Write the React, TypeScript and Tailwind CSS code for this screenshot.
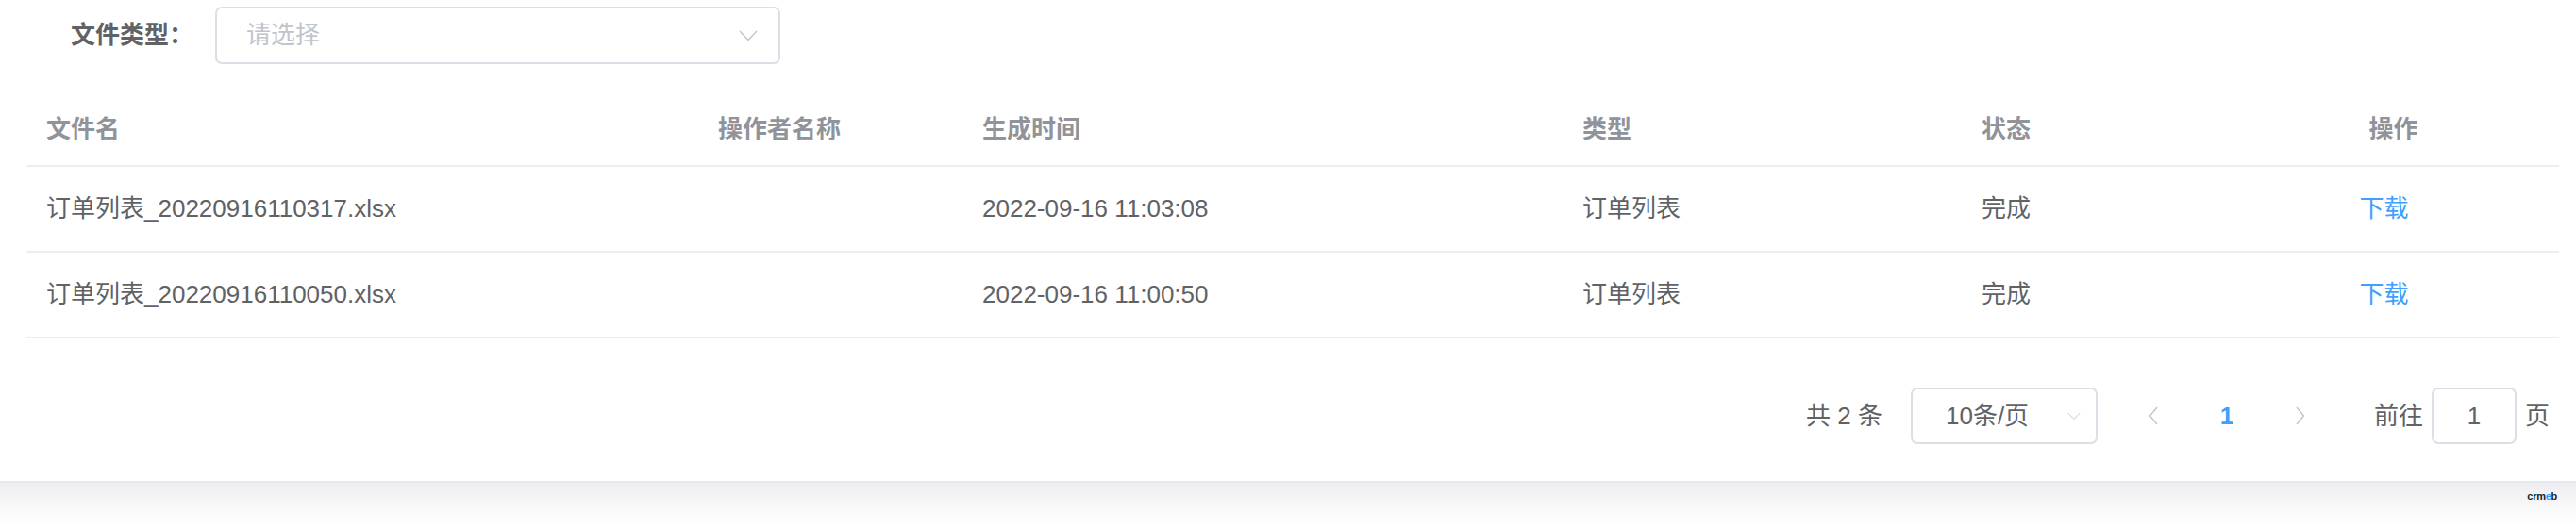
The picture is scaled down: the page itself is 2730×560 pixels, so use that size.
import React from 'react';

const rows = [
  { name: '订单列表_20220916110317.xlsx', op: '', time: '2022-09-16 11:03:08', type: '订单列表', status: '完成' },
  { name: '订单列表_20220916110050.xlsx', op: '', time: '2022-09-16 11:00:50', type: '订单列表', status: '完成' },
];

const cols = 'grid grid-cols-[712px_280px_636px_423px_282px_351px]';

function Chevron({ className }: { className?: string }) {
  return (
    <svg viewBox="0 0 20 12" className={className} fill="none" stroke="currentColor" strokeWidth="1.3">
      <polyline points="1,1 10,10.5 19,1" />
    </svg>
  );
}

function Arrow({ dir }: { dir: 'left' | 'right' }) {
  return (
    <svg viewBox="0 0 10 20" className="w-[10px] h-[20px] text-[#c0c4cc]" fill="none" stroke="currentColor" strokeWidth="1.4">
      {dir === 'left' ? <polyline points="9,1 1.5,10 9,19" /> : <polyline points="1,1 8.5,10 1,19" />}
    </svg>
  );
}

export default function App() {
  return (
    <div className="w-full h-[560px] overflow-hidden bg-white text-[26px] text-[#606266]" style={{ fontFamily: '"Liberation Sans", "Noto Sans CJK SC", sans-serif' }}>
      <div className="h-[512px] bg-white pl-[28px] pr-[18px] border-b-2 border-[#e6e8ef]">
        {/* filter */}
        <div className="flex items-center pt-[7px]">
          <span className="ml-[47px] w-[153px] font-bold text-[#606266]">文件类型：</span>
          <div className="w-[599px] h-[61px] border-2 border-[#dcdfe6] rounded-[7px] flex items-center justify-between pl-[31px] pr-[22px]">
            <span className="text-[#c0c4cc]">请选择</span>
            <Chevron className="w-[20px] h-[12px] text-[#c0c4cc]" />
          </div>
        </div>

        {/* table */}
        <div className="mt-[31px]">
          <div className={`${cols} h-[78px] items-center border-b-2 border-[#ebeef5] text-[#909399] font-bold`}>
            <div className="pl-[21px]">文件名</div>
            <div className="pl-[21px]">操作者名称</div>
            <div className="pl-[21px]">生成时间</div>
            <div className="pl-[21px]">类型</div>
            <div className="pl-[21px]">状态</div>
            <div className="text-center">操作</div>
          </div>
          {rows.map((r) => (
            <div key={r.name} className={`${cols} h-[91px] items-center border-b-2 border-[#ebeef5]`}>
              <div className="pl-[21px]">{r.name}</div>
              <div className="pl-[21px]">{r.op}</div>
              <div className="pl-[21px]">{r.time}</div>
              <div className="pl-[21px]">{r.type}</div>
              <div className="pl-[21px]">{r.status}</div>
              <div className="text-center pr-[20px] text-[#409eff]">下载</div>
            </div>
          ))}
        </div>

        {/* pagination */}
        <div className="mt-[52px] flex items-center justify-end pr-[10px]">
          <span className="whitespace-pre">共 2 条</span>
          <div className="ml-[30px] w-[198px] h-[60px] border-2 border-[#dcdfe6] rounded-[7px] flex items-center justify-between pl-[35px] pr-[16px]">
            <span>10条/页</span>
            <Chevron className="w-[14px] h-[9px] text-[#c0c4cc]" />
          </div>
          <div className="ml-[20px] w-[78px] flex justify-center">
            <Arrow dir="left" />
          </div>
          <div className="w-[78px] text-center font-bold text-[#409eff]">1</div>
          <div className="w-[78px] flex justify-center">
            <Arrow dir="right" />
          </div>
          <span className="ml-[39px]">前往</span>
          <div className="ml-[9px] w-[90px] h-[60px] border-2 border-[#dcdfe6] rounded-[7px] flex items-center justify-center">1</div>
          <span className="ml-[9px]">页</span>
        </div>
      </div>

      {/* bottom strip */}
      <div className="h-[48px] bg-linear-to-b from-[#eeeef2] via-[#f8f8f9] to-white flex justify-end pr-[20px] pt-[9px]">
        <span className="text-[11px] leading-none font-bold text-[#222] tracking-tight">
          crm<span className="text-[#1e9fff]">e</span>b
        </span>
      </div>
    </div>
  );
}
